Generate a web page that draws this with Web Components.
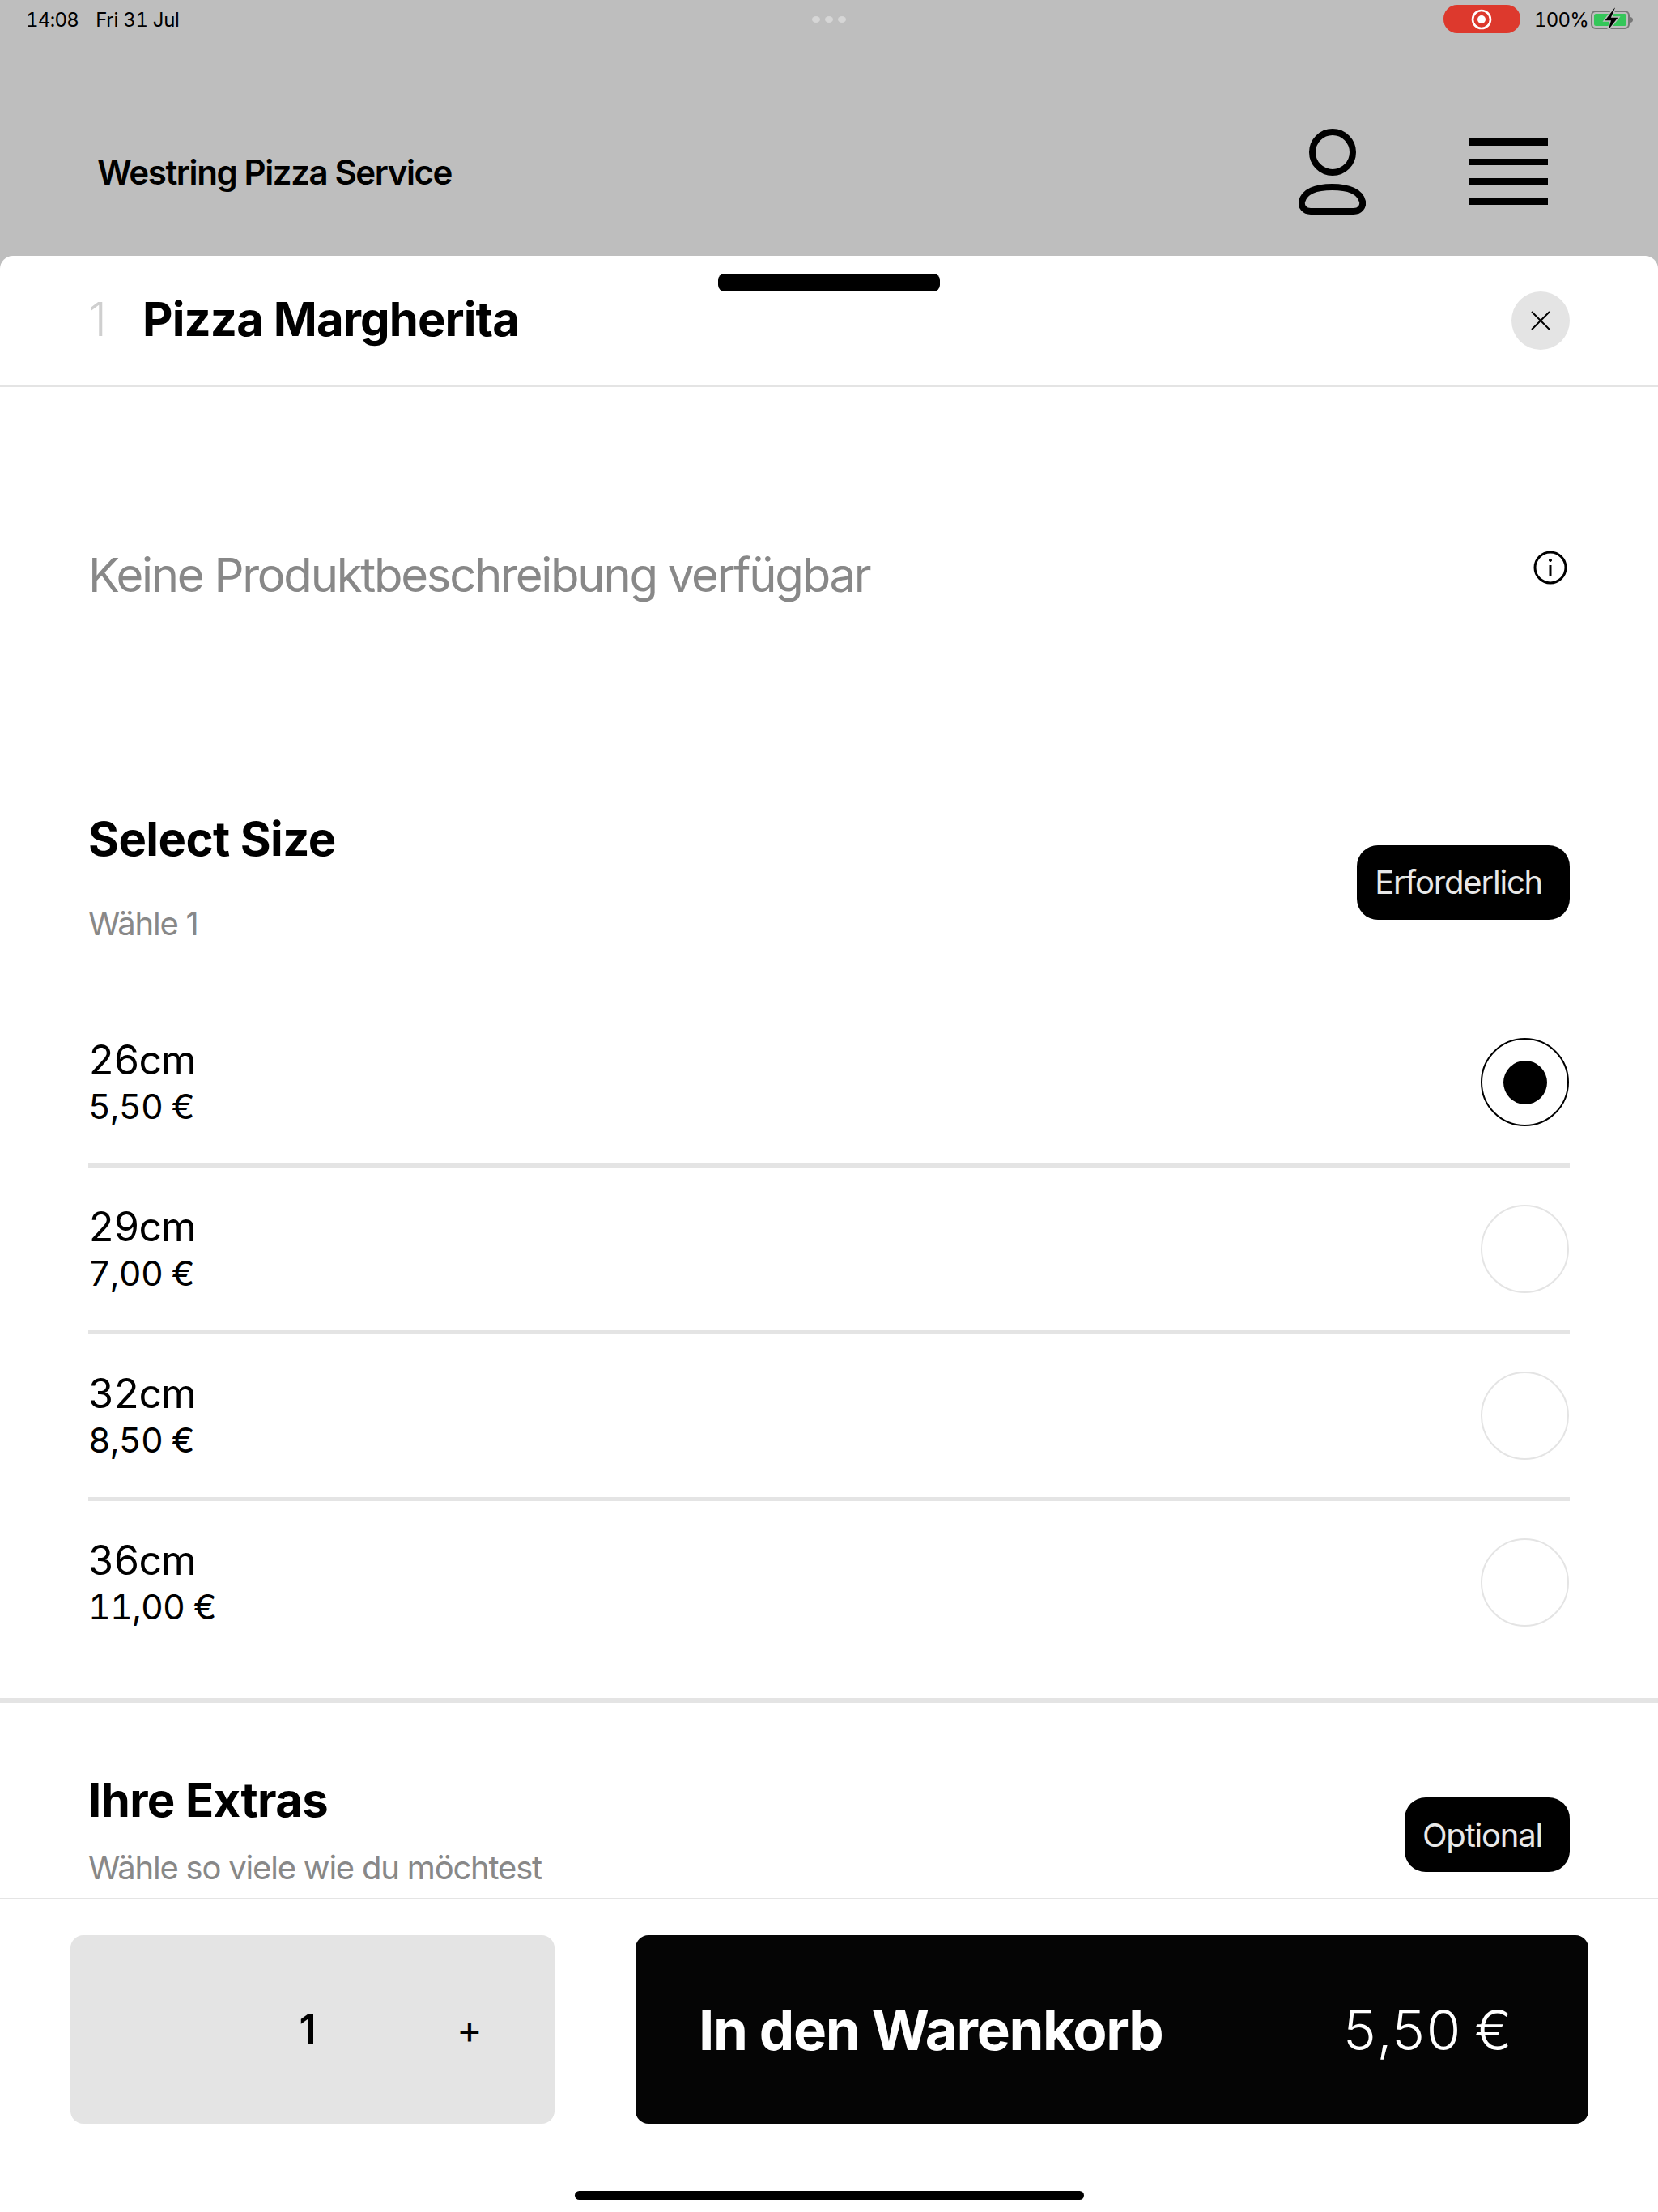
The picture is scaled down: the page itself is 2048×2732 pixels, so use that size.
<!DOCTYPE html>
<html lang="de">
<head>
<meta charset="utf-8">
<title>Pizza Margherita</title>
<style>
  html, body { margin: 0; height: 100%; }
  body { font-family: Inter, "Liberation Sans", sans-serif; color: #000; background: #fff; }
  #app { display: flex; flex-direction: column; height: 2732px; overflow: hidden; background: #bebebe; }
</style>
</head>
<body>
<div id="app">
  <site-header name="Westring Pizza Service"></site-header>
  <product-sheet>
    <sheet-title slot="title" count="1" name="Pizza Margherita"></sheet-title>
    <product-info>Keine Produktbeschreibung verfügbar</product-info>
    <option-group heading="Select Size" hint="Wähle 1" badge="Erforderlich" style="--hint-gap:45px">
      <option-row label="26cm" price="5,50 €" selected></option-row>
      <option-row label="29cm" price="7,00 €"></option-row>
      <option-row label="32cm" price="8,50 €"></option-row>
      <option-row label="36cm" price="11,00 €"></option-row>
    </option-group>
    <option-group heading="Ihre Extras" hint="Wähle so viele wie du möchtest" badge="Optional" style="--hint-gap:24px"></option-group>
    <cart-footer slot="footer" qty="1" price="5,50 €"></cart-footer>
  </product-sheet>
</div>

<script>
class StatusBar extends HTMLElement {
  constructor() {
    super();
    this.attachShadow({ mode: 'open' });
    this.shadowRoot.innerHTML = `
      <style>
        :host { display: flex; align-items: center; height: 48px; padding: 0 30px 0 32px; font-size: 24px; font-variant-numeric: tabular-nums; position: relative; }
        .time { letter-spacing: -0.7px; }
        .date { margin-left: 21px; letter-spacing: -0.3px; }
        .dots { position: absolute; left: 1003px; top: 20px; display: flex; gap: 6px; }
        .dots i { width: 10px; height: 8px; border-radius: 50%; background: #d6d6d6; }
        .right { margin-left: auto; display: flex; align-items: center; }
        .rec { width: 95px; height: 35px; border-radius: 17px; background: #dd392d; display: flex; align-items: center; justify-content: center; margin-top: -1px; }
        .pct { margin-left: 17px; letter-spacing: -0.8px; }
        svg { display: block; }
        .batt { margin-left: 3px; }
      </style>
      <span class="time">14:08</span><span class="date">Fri 31 Jul</span>
      <div class="dots"><i></i><i></i><i></i></div>
      <div class="right">
        <div class="rec">
          <svg width="26" height="26" viewBox="0 0 26 26"><circle cx="13" cy="13" r="11" fill="none" stroke="#fff" stroke-width="2.6"/><circle cx="13" cy="13" r="5" fill="#fff"/></svg>
        </div>
        <span class="pct">100%</span>
        <svg class="batt" width="53" height="36" viewBox="0 0 53 36">
          <rect x="1" y="8" width="46" height="21" rx="5" fill="none" stroke="#777" stroke-width="2"/>
          <rect x="4" y="11" width="40" height="15" rx="2.500" fill="#34c759"/>
          <path d="M49 15c2 .6 3 1.800 3 3.500s-1 2.900-3 3.500z" fill="#777"/>
          <path d="M29 3 16 20h8l-4 14 15-19h-9l5-12z" fill="#000" stroke="#bebebe" stroke-width="1.500"/>
        </svg>
      </div>
    `;
  }
}
customElements.define('status-bar', StatusBar);

class SiteHeader extends HTMLElement {
  constructor() {
    super();
    this.attachShadow({ mode: 'open' });
    this.shadowRoot.innerHTML = `
      <style>
        :host { display: block; height: 316px; flex: none; background: #bebebe; }
        .row { display: flex; align-items: center; height: 208px; margin-top: 60px; padding: 0 136px 0 120px; }
        .name { font-size: 42px; font-weight: 600; letter-spacing: -1.400px; }
        .user { margin-left: auto; margin-right: 127px; display: block; }
        .menu { width: 98px; display: flex; flex-direction: column; gap: 16px; }
        .menu i { height: 8.500px; background: #000; }
      </style>
      <status-bar></status-bar>
      <div class="row">
        <span class="name"></span>
        <svg class="user" width="83" height="106" viewBox="0 0 83 106" fill="none" stroke="#000" stroke-width="8">
          <circle cx="42" cy="29" r="25"/>
          <path d="M15 102H68C76 102 80 96 79 90C76 78 62 72 41.500 72C21 72 7 78 4 90C3 96 7 102 15 102Z"/>
        </svg>
        <div class="menu"><i></i><i></i><i></i><i></i></div>
      </div>
    `;
    this.shadowRoot.querySelector('.name').textContent = this.getAttribute('name');
  }
}
customElements.define('site-header', SiteHeader);

class ProductSheet extends HTMLElement {
  constructor() {
    super();
    this.attachShadow({ mode: 'open' });
    this.shadowRoot.innerHTML = `
      <style>
        :host { display: flex; flex-direction: column; flex: 1; min-height: 0; position: relative; background: #fff; border-radius: 16px 16px 0 0; overflow: hidden; }
        .handle { position: absolute; left: 887px; top: 22px; width: 274px; height: 22px; border-radius: 8px; background: #000; }
        .body { flex: 1; min-height: 0; overflow: hidden; }
      </style>
      <div class="handle"></div>
      <slot name="title"></slot>
      <div class="body"><slot></slot></div>
      <slot name="footer"></slot>
    `;
  }
}
customElements.define('product-sheet', ProductSheet);

class SheetTitle extends HTMLElement {
  constructor() {
    super();
    this.attachShadow({ mode: 'open' });
    this.shadowRoot.innerHTML = `
      <style>
        :host { display: flex; align-items: center; height: 156px; padding: 0 109px 4px; border-bottom: 2px solid #e4e4e4; font-size: 58px; }
        .count { width: 67px; color: #cfcfcf; font-weight: 300; }
        .name { font-weight: 700; letter-spacing: -0.9px; }
        .close { margin-left: auto; width: 72px; height: 72px; margin-top: 4px; border-radius: 50%; background: #e4e4e4; display: flex; align-items: center; justify-content: center; }
      </style>
      <span class="count"></span><span class="name"></span>
      <div class="close">
        <svg width="24" height="24" viewBox="0 0 24 24" fill="none" stroke="#000" stroke-width="2"><path d="M1 1 23 23M23 1 1 23"/></svg>
      </div>
    `;
    this.shadowRoot.querySelector('.count').textContent = this.getAttribute('count');
    this.shadowRoot.querySelector('.name').textContent = this.getAttribute('name');
  }
}
customElements.define('sheet-title', SheetTitle);

class ProductInfo extends HTMLElement {
  constructor() {
    super();
    this.attachShadow({ mode: 'open' });
    this.shadowRoot.innerHTML = `
      <style>
        :host { display: flex; justify-content: space-between; height: 523px; padding: 200px 109px 0; box-sizing: border-box; font-size: 58px; line-height: 64px; color: #888; letter-spacing: -2.250px; }
        svg { display: block; margin: 2px 3px 0 0; }
      </style>
      <span><slot></slot></span>
      <svg width="42" height="42" viewBox="0 0 42 42" fill="none" stroke="#000" stroke-width="3">
        <circle cx="21" cy="21" r="19"/>
        <path d="M21 18V31" />
        <circle cx="21" cy="12" r="1.500" fill="#000" stroke-width="1"/>
      </svg>
    `;
  }
}
customElements.define('product-info', ProductInfo);

class OptionGroup extends HTMLElement {
  constructor() {
    super();
    this.attachShadow({ mode: 'open' });
    this.shadowRoot.innerHTML = `
      <style>
        :host { display: block; padding: 0 109px; }
        :host(:not(:last-child)) { padding-bottom: 42px; border-bottom: 6px solid #e4e4e4; margin-bottom: 85px; }
        .head { display: flex; justify-content: space-between; align-items: center; }
        h2 { margin: 0; font-size: 58px; line-height: 70px; font-weight: 700; letter-spacing: -0.6px; }
        p { margin: var(--hint-gap, 45px) 0 0; font-size: 40px; line-height: 50px; color: #888; letter-spacing: -1.200px; }
        .badge { margin-top: 12px; height: 92px; padding: 0 34px 0 22px; border-radius: 26px; background: #000; color: #e8e8e8; font-size: 40px; display: flex; align-items: center; letter-spacing: -1.200px; }
        .rows { margin-top: 70px; }
      </style>
      <div class="head">
        <div><h2></h2><p></p></div>
        <span class="badge"></span>
      </div>
      <div class="rows"><slot></slot></div>
    `;
    this.shadowRoot.querySelector('h2').textContent = this.getAttribute('heading');
    this.shadowRoot.querySelector('p').textContent = this.getAttribute('hint');
    this.shadowRoot.querySelector('.badge').textContent = this.getAttribute('badge');
  }
}
customElements.define('option-group', OptionGroup);

class OptionRow extends HTMLElement {
  constructor() {
    super();
    this.attachShadow({ mode: 'open' });
    this.shadowRoot.innerHTML = `
      <style>
        :host { display: flex; align-items: center; justify-content: space-between; padding: 46px 0; }
        :host(:not(:last-child)) { border-bottom: 5px solid #e4e4e4; }
        .text { height: 109px; font-variant-numeric: tabular-nums; }
        .label { font-size: 50px; line-height: 54px; letter-spacing: -1.200px; }
        .price { font-size: 43px; line-height: 58px; margin-top: 1px; letter-spacing: -0.8px; }
        .radio { width: 109px; height: 109px; margin-right: 1px; box-sizing: border-box; border: 2px solid #e4e4e4; border-radius: 50%; display: flex; align-items: center; justify-content: center; }
        :host([selected]) .radio { border: 2.500px solid #000; }
        :host([selected]) .radio::after { content: ""; width: 54px; height: 54px; border-radius: 50%; background: #000; }
      </style>
      <div class="text"><div class="label"></div><div class="price"></div></div>
      <div class="radio"></div>
    `;
    this.shadowRoot.querySelector('.label').textContent = this.getAttribute('label');
    this.shadowRoot.querySelector('.price').textContent = this.getAttribute('price');
  }
}
customElements.define('option-row', OptionRow);

class CartFooter extends HTMLElement {
  constructor() {
    super();
    this.attachShadow({ mode: 'open' });
    this.shadowRoot.innerHTML = `
      <style>
        :host { display: block; height: 388px; box-sizing: border-box; flex: none; background: #fff; border-top: 2px solid #e4e4e4; padding-top: 44px; }
        .bar { display: flex; gap: 100px; height: 233px; padding: 0 86px 0 87px; }
        .qty { width: 598px; flex: none; border-radius: 16px; background: #e4e4e4; display: grid; grid-template-columns: 193px 200px 200px; align-items: center; justify-items: center; }
        .num { grid-column: 2; font-size: 50px; font-weight: 600; margin-top: -2px; }
        .plus { font-size: 48px; line-height: 1; }
        .add { flex: 1; border-radius: 16px; background: #050505; color: #fff; display: flex; align-items: center; justify-content: space-between; padding: 0 96px 0 78px; font-size: 69px; }
        .add b { font-weight: 700; letter-spacing: -1.300px; }
        .add span { font-weight: 300; font-variant-numeric: tabular-nums; letter-spacing: -1.500px; }
        .home { width: 629px; height: 11px; border-radius: 6px; background: #000; margin: 83px auto 0; }
      </style>
      <div class="bar">
        <div class="qty"><span class="num"></span><span class="plus">+</span></div>
        <div class="add"><b>In den Warenkorb</b><span class="sum"></span></div>
      </div>
      <div class="home"></div>
    `;
    this.shadowRoot.querySelector('.num').textContent = this.getAttribute('qty');
    this.shadowRoot.querySelector('.sum').textContent = this.getAttribute('price');
  }
}
customElements.define('cart-footer', CartFooter);
</script>
</body>
</html>
